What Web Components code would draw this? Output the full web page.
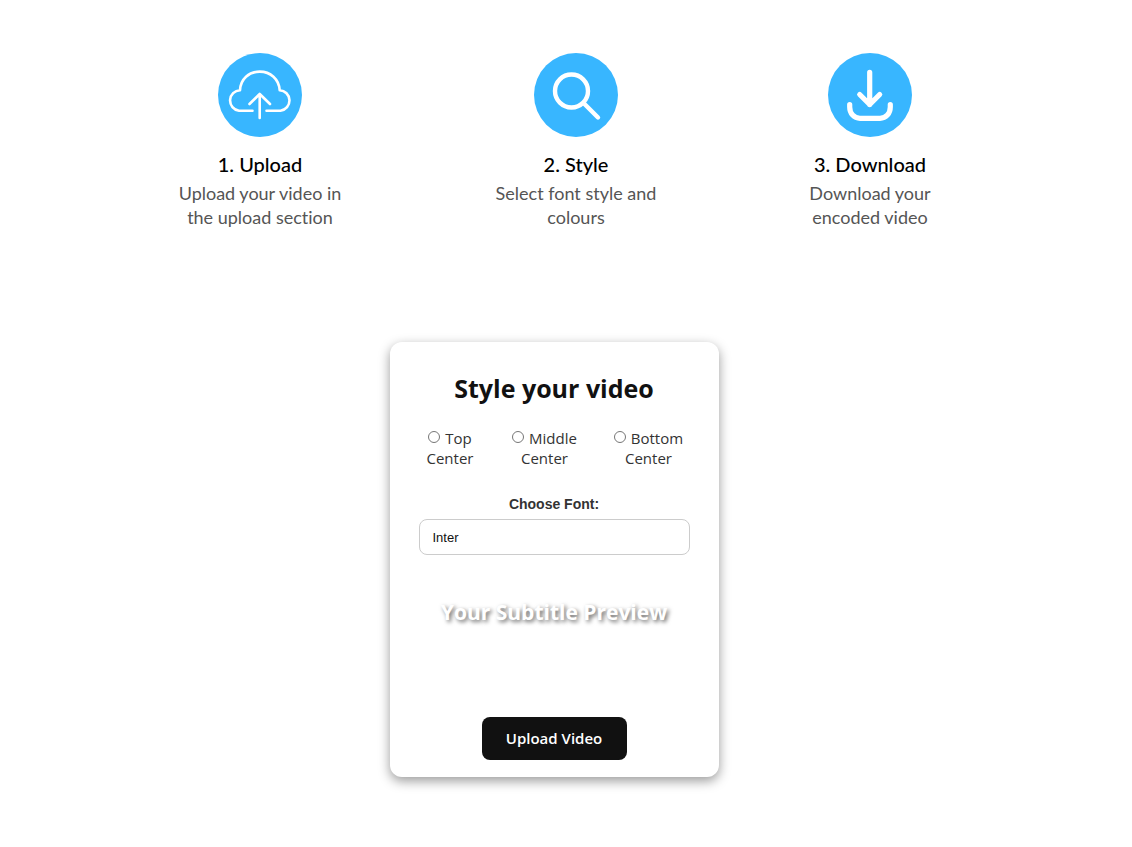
<!DOCTYPE html>
<html lang="en">
<head>
<meta charset="utf-8">
<meta name="viewport" content="width=device-width, initial-scale=1">
<title>Style your video</title>
<style>
  body { margin: 0; background: #fff; font-family: "Open Sans", "Noto Sans", sans-serif; }
</style>
</head>
<body>
<subtitle-page>
  <step-list slot="steps">
    <step-item>
      <svg slot="icon" viewBox="0 0 84 84" fill="none" stroke="#fff" stroke-width="2.6" stroke-linecap="round" stroke-linejoin="round" aria-hidden="true">
        <path d="M34.500 57.700H21A10.300 10.300 0 0 1 22 37.200C22.500 26 31 18.600 41.700 18.600S61 26 61.700 37.200A10.300 10.300 0 0 1 62.500 57.700H48.500"/>
        <path d="M41.700 65V41M31.500 51 41.700 41 52 51"/>
      </svg>
      <span slot="title">1. Upload</span>
      Upload your video in the upload section
    </step-item>
    <step-item>
      <svg slot="icon" viewBox="0 0 84 84" fill="none" stroke="#fff" stroke-width="4.400" stroke-linecap="round" aria-hidden="true">
        <circle cx="37.500" cy="38" r="16.500"/>
        <path d="M50 50.500 64 64.500"/>
      </svg>
      <span slot="title">2. Style</span>
      Select font style and colours
    </step-item>
    <step-item class="narrow">
      <svg slot="icon" viewBox="0 0 84 84" fill="none" stroke="#fff" stroke-width="5.200" stroke-linecap="round" stroke-linejoin="round" aria-hidden="true">
        <path d="M41.700 19.400V51.500M31.700 41.500 41.700 51.500 51.700 41.500"/>
        <path d="M21.700 51.500V54C21.700 60.500 26 65.300 32 65.300H52C58 65.300 62.300 60.500 62.300 54V51.500"/>
      </svg>
      <span slot="title">3. Download</span>
      Download your encoded video
    </step-item>
  </step-list>
  <style-card>
    <span slot="heading">Style your video</span>
    <position-picker></position-picker>
    <font-picker></font-picker>
    <subtitle-preview>Your Subtitle Preview</subtitle-preview>
    <upload-button>Upload Video</upload-button>
  </style-card>
</subtitle-page>
<script>
  const define = (name, markup) => customElements.define(name, class extends HTMLElement {
    constructor() {
      super();
      this.attachShadow({ mode: "open" }).innerHTML = markup;
    }
  });

  define("subtitle-page", `
    <style>
      :host { display: block; padding: 53px 24px 70px 0; }
      main { display: flex; flex-direction: column; align-items: center; gap: 113px; }
    </style>
    <main><slot name="steps"></slot><slot></slot></main>`);

  define("step-list", `
    <style>
      :host { display: flex; flex-wrap: wrap; justify-content: center; gap: 32px 148px; }
    </style>
    <slot></slot>`);

  define("step-item", `
    <style>
      :host { display: flex; flex-direction: column; align-items: center; width: 168px; text-align: center; font-family: Lato, sans-serif; font-variant-ligatures: none; }
      :host(.narrow) { width: 124px; }
      .disc { display: flex; width: 84px; height: 84px; border-radius: 50%; background: #38b6ff; }
      ::slotted(svg) { width: 84px; height: 84px; }
      h2 { margin: 15px 0 5px; font-size: 20px; font-weight: 500; line-height: 24px; color: #000; }
      p { margin: 0; font-size: 18px; line-height: 24px; color: #555; }
    </style>
    <div class="disc"><slot name="icon"></slot></div>
    <h2><slot name="title"></slot></h2>
    <p><slot></slot></p>`);

  define("style-card", `
    <style>
      :host { display: block; box-sizing: border-box; width: 100%; max-width: 329px; padding: 29px 29px 17px; border-radius: 12px; background: #fff; box-shadow: 0 4px 12px rgba(0, 0, 0, .4); }
      h1 { margin: 0 0 23px; font-size: 25px; font-weight: 700; line-height: 34px; text-align: center; color: #111; }
    </style>
    <h1><slot name="heading"></slot></h1>
    <slot></slot>`);

  define("position-picker", `
    <style>
      :host { display: block; }
      fieldset { display: grid; grid-template-columns: 63fr 78fr 82fr; column-gap: 24px; margin: 0; padding: 0; border: 0; min-width: 0; }
      label { font-size: 15px; line-height: 20px; text-align: center; color: #333; }
      input { width: 12px; height: 12px; margin: 0 1px 0 0; vertical-align: 1px; }
    </style>
    <fieldset aria-label="Subtitle position">
      <label><input type="radio" name="position" value="top"> Top Center</label>
      <label><input type="radio" name="position" value="middle"> Middle Center</label>
      <label><input type="radio" name="position" value="bottom"> Bottom Center</label>
    </fieldset>`);

  define("font-picker", `
    <style>
      :host { display: block; margin-top: 27px; font-family: "Liberation Sans", Arial, sans-serif; }
      label { display: block; margin-bottom: 6px; font-size: 14px; font-weight: 700; line-height: 18px; text-align: center; color: #333; }
      select { appearance: none; display: block; box-sizing: border-box; width: 100%; height: 36px; padding: 0 13px; border: 1px solid #ccc; border-radius: 8px; background: #fff; font: 13px "Liberation Sans", Arial, sans-serif; color: #111; }
    </style>
    <label for="font">Choose Font:</label>
    <select id="font"><option>Inter</option></select>`);

  define("subtitle-preview", `
    <style>
      :host { display: block; height: 120px; margin-top: 42px; font-size: 21px; font-weight: 700; line-height: 30px; text-align: center; white-space: nowrap; color: #fff; text-shadow: 2px 2px 4px rgba(0, 0, 0, .6); }
    </style>
    <slot></slot>`);

  define("upload-button", `
    <style>
      :host { display: flex; justify-content: center; }
      button { min-width: 145px; height: 43px; padding: 0 24px 2px; border: 0; border-radius: 8px; background: #111; font: 600 15px "Open Sans", sans-serif; color: #fff; white-space: nowrap; cursor: pointer; }
    </style>
    <button type="button"><slot></slot></button>`);
</script>
</body>
</html>
